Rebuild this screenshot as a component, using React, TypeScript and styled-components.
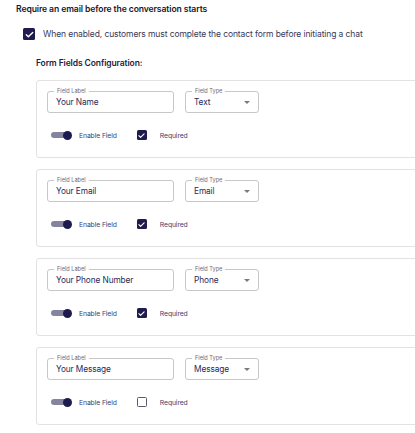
import styled, { createGlobalStyle } from "styled-components";

const GlobalStyle = createGlobalStyle`
  html, body {
    margin: 0;
    padding: 0;
    overflow: hidden;
    background: #ffffff;
    font-family: Inter, "Open Sans", sans-serif;
  }
`;

type Field = {
  label: string;
  type: string;
  enabled: boolean;
  required: boolean;
};

const fields: Field[] = [
  { label: "Your Name", type: "Text", enabled: true, required: true },
  { label: "Your Email", type: "Email", enabled: true, required: true },
  { label: "Your Phone Number", type: "Phone", enabled: true, required: true },
  { label: "Your Message", type: "Message", enabled: true, required: false },
];

function CheckIcon({ size }: { size: number }) {
  return (
    <svg width={size} height={size} viewBox="0 0 24 24" fill="none">
      <path d="M5 12.5l4.5 4.5L19 7.5" stroke="#ffffff" strokeWidth="3" strokeLinecap="round" strokeLinejoin="round" />
    </svg>
  );
}

export default function App() {
  return (
    <>
      <GlobalStyle />
      <Page>
        <Heading>Require an email before the conversation starts</Heading>
        <ConsentRow>
          <Box $checked $size={12}>
            <CheckIcon size={11} />
          </Box>
          <ConsentText>When enabled, customers must complete the contact form before initiating a chat</ConsentText>
        </ConsentRow>
        <Section>
          <SectionTitle>Form Fields Configuration:</SectionTitle>
          <CardList>
            {fields.map((f) => (
              <Card key={f.label}>
                <InputsRow>
                  <Outlined $width={127}>
                    <Legend>Field Label</Legend>
                    <Value>{f.label}</Value>
                  </Outlined>
                  <Outlined $width={74}>
                    <Legend>Field Type</Legend>
                    <Value>{f.type}</Value>
                    <Caret />
                  </Outlined>
                </InputsRow>
                <OptionsRow>
                  <Option>
                    <Toggle $on={f.enabled}>
                      <Knob />
                    </Toggle>
                    <OptionText>Enable Field</OptionText>
                  </Option>
                  <Option>
                    <Box $checked={f.required} $size={10}>
                      {f.required && <CheckIcon size={9} />}
                    </Box>
                    <OptionText $gap>Required</OptionText>
                  </Option>
                </OptionsRow>
              </Card>
            ))}
          </CardList>
        </Section>
      </Page>
    </>
  );
}

const Page = styled.div`
  width: 100vw;
  overflow: hidden;
  box-sizing: border-box;
  padding: 4px 0 0 16px;
  color: #1b1b2f;
`;

const Heading = styled.div`
  font-size: 8.6px;
  font-weight: 600;
  line-height: 10px;
  letter-spacing: -0.1px;
  color: #16162a;
`;

const ConsentRow = styled.div`
  display: flex;
  align-items: center;
  gap: 8px;
  margin: 14px 0 0 7px;
`;

const Box = styled.div<{ $checked?: boolean; $size: number }>`
  width: ${(p) => p.$size}px;
  height: ${(p) => p.$size}px;
  box-sizing: border-box;
  border-radius: 1.5px;
  display: flex;
  align-items: center;
  justify-content: center;
  flex-shrink: 0;
  background: ${(p) => (p.$checked ? "#1f1b4d" : "#ffffff")};
  border: ${(p) => (p.$checked ? "none" : "1.3px solid #5a5a6a")};
`;

const ConsentText = styled.span`
  font-size: 8.5px;
  color: #35395a;
  letter-spacing: -0.1px;
`;

const Section = styled.div`
  margin: 18px 0 0 20px;
`;

const SectionTitle = styled.div`
  font-size: 8.5px;
  font-weight: 600;
  color: #1f2140;
  line-height: 10px;
  letter-spacing: -0.1px;
`;

const CardList = styled.div`
  display: flex;
  flex-direction: column;
  gap: 11px;
  margin-top: 12px;
`;

const Card = styled.div`
  width: 420px;
  height: 78px;
  box-sizing: border-box;
  border: 1px solid #e2e2e2;
  border-radius: 3px;
  padding: 10px 0 0 10px;
`;

const InputsRow = styled.div`
  display: flex;
  gap: 11px;
`;

const Outlined = styled.div<{ $width: number }>`
  position: relative;
  width: ${(p) => p.$width}px;
  height: 22px;
  box-sizing: border-box;
  border: 1px solid #c7c7c7;
  border-radius: 3px;
  display: flex;
  align-items: center;
  padding-left: 8px;
`;

const Legend = styled.span`
  position: absolute;
  top: -4px;
  left: 6px;
  padding: 0 3px;
  background: #ffffff;
  font-size: 5.6px;
  line-height: 7px;
  color: #6a6a7a;
`;

const Value = styled.span`
  font-size: 8.3px;
  color: #1f2a5c;
  letter-spacing: -0.1px;
`;

const Caret = styled.span`
  position: absolute;
  right: 8px;
  top: 9px;
  border-left: 3px solid transparent;
  border-right: 3px solid transparent;
  border-top: 3px solid #7a7a7a;
`;

const OptionsRow = styled.div`
  display: flex;
  align-items: center;
  gap: 20px;
  margin-top: 17px;
  padding-left: 4px;
`;

const Option = styled.div`
  display: flex;
  align-items: center;
`;

const Toggle = styled.div<{ $on: boolean }>`
  position: relative;
  width: 16px;
  height: 6px;
  border-radius: 3px;
  background: ${(p) => (p.$on ? "#85849f" : "#bdbdbd")};
`;

const Knob = styled.span`
  position: absolute;
  right: -5px;
  top: -1.5px;
  width: 9px;
  height: 9px;
  border-radius: 50%;
  background: #1c1a4e;
`;

const OptionText = styled.span<{ $gap?: boolean }>`
  font-size: 6.8px;
  color: #3a4270;
  margin-left: ${(p) => (p.$gap ? 13 : 12)}px;
  letter-spacing: -0.1px;
`;
